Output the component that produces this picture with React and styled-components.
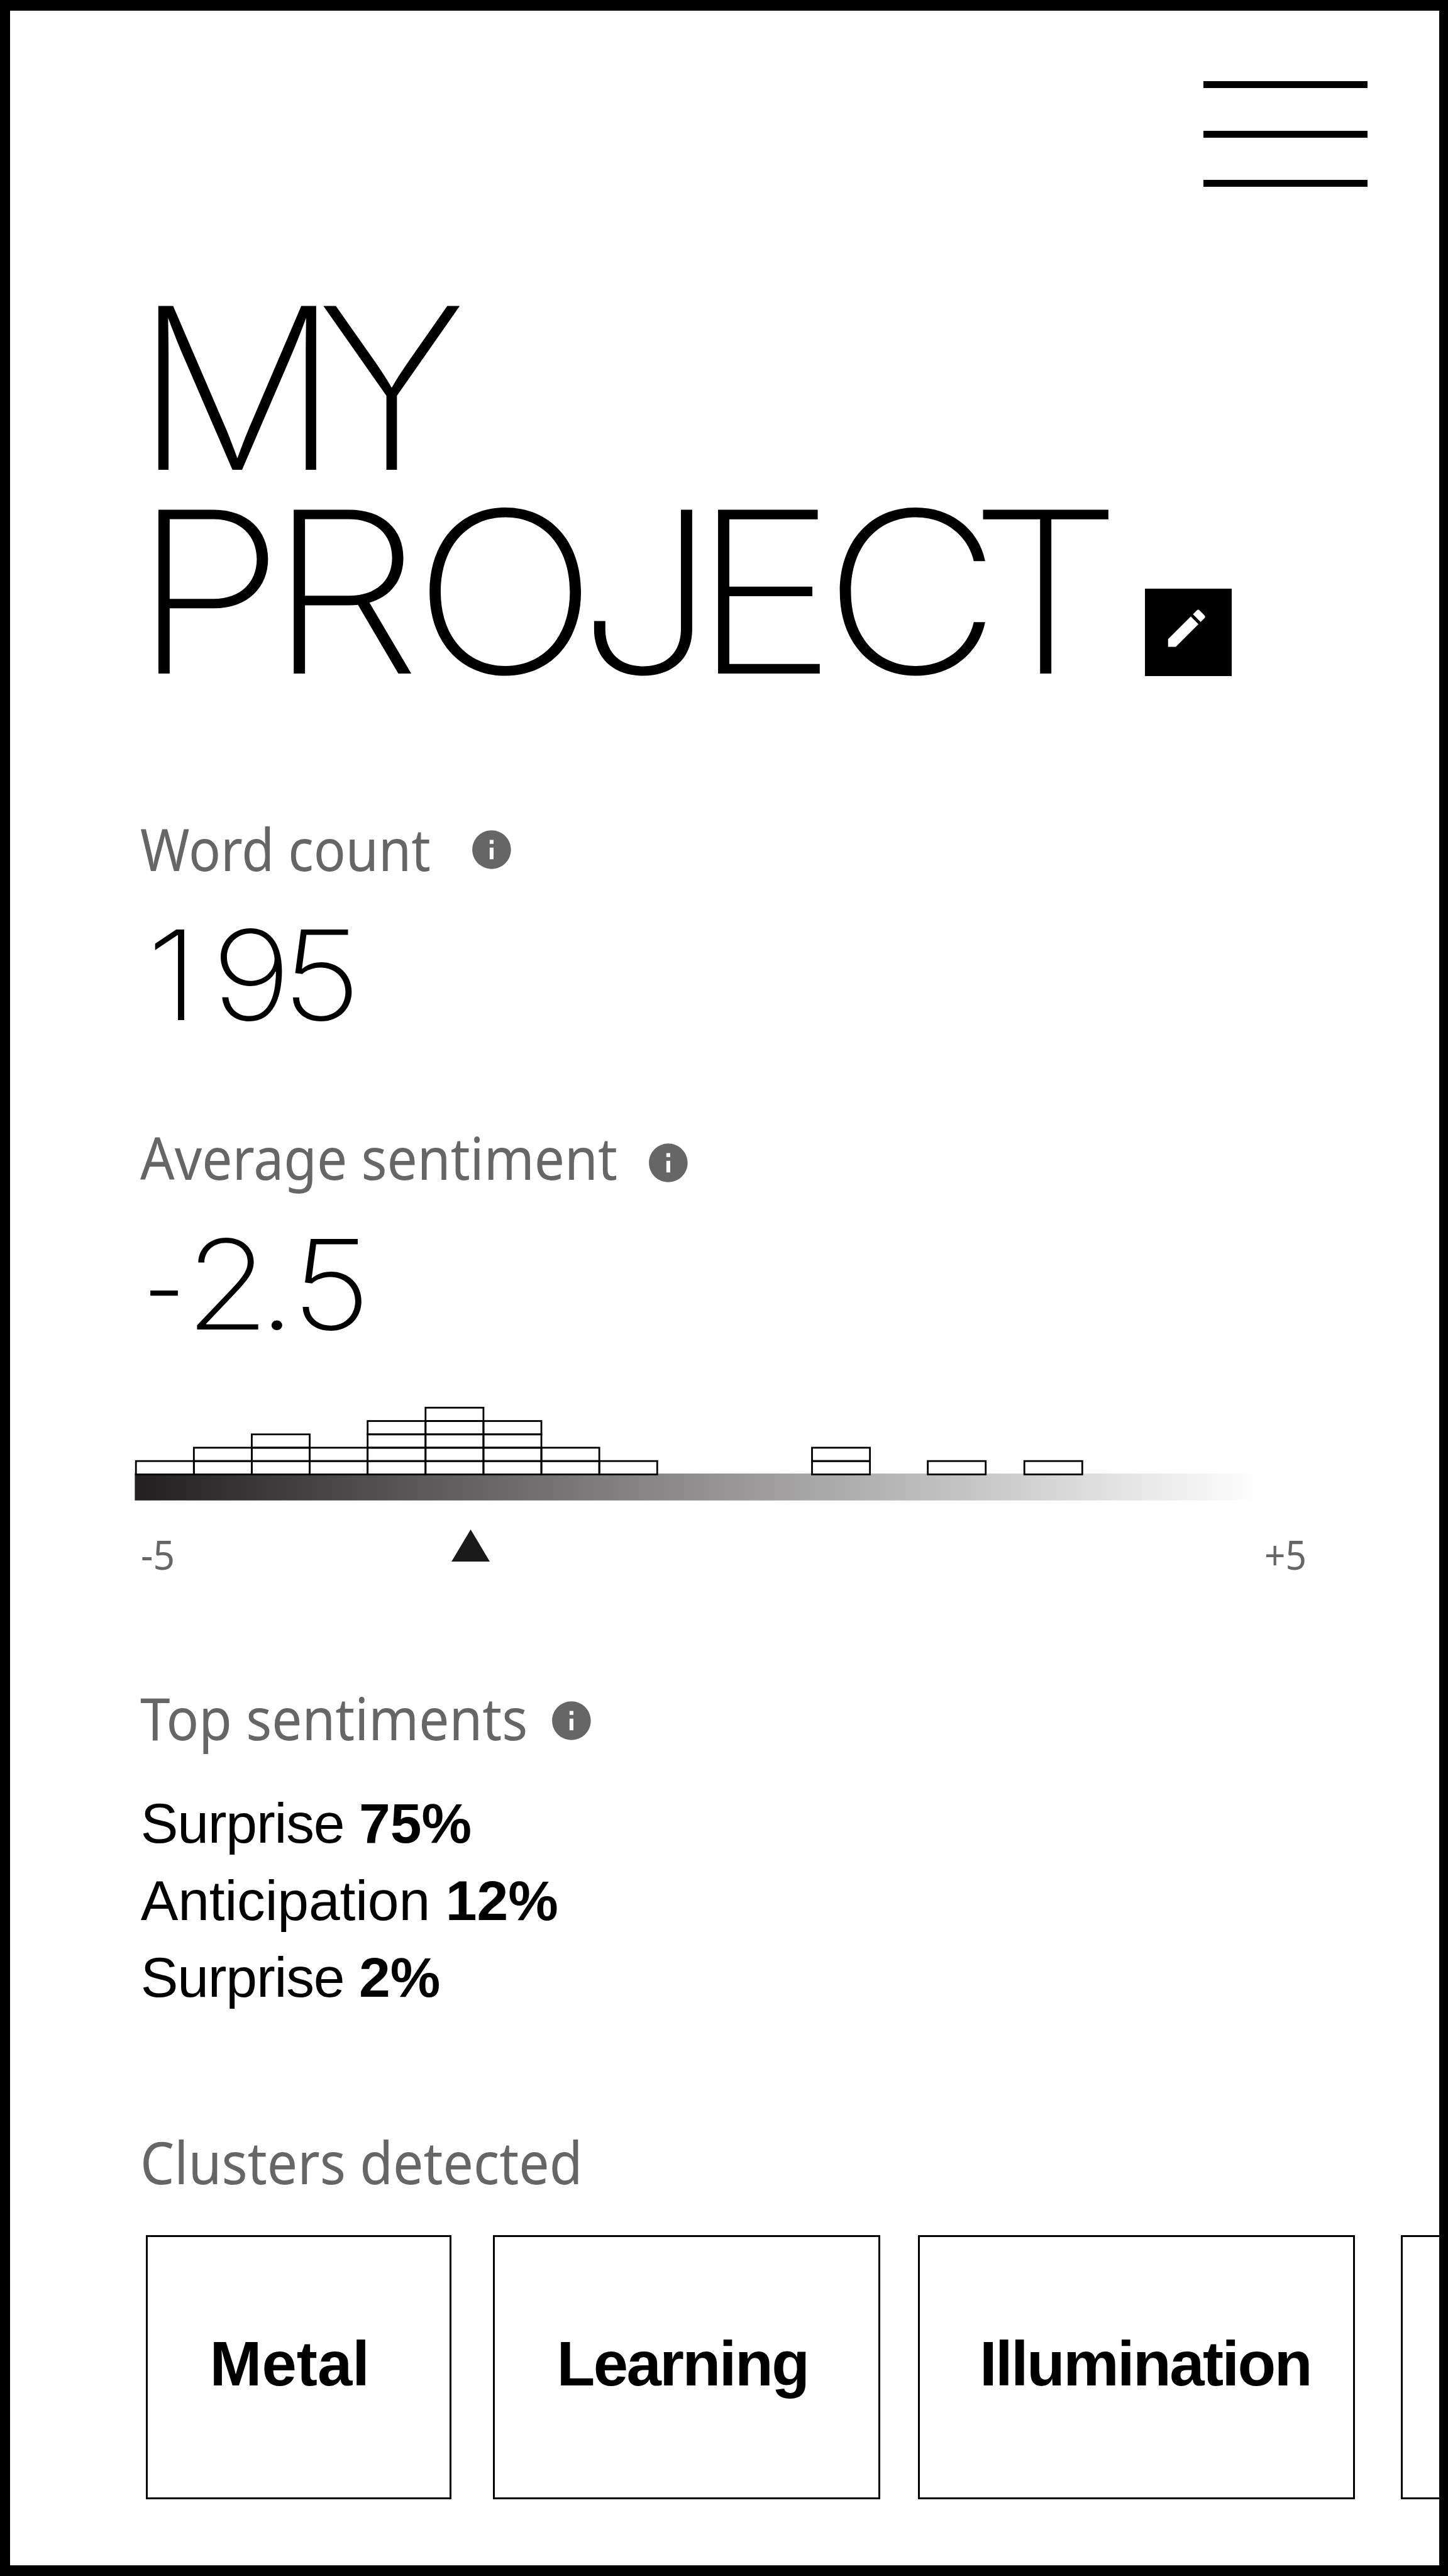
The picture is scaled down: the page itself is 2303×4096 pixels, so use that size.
import React from "react";
import styled, { createGlobalStyle } from "styled-components";

const GlobalStyle = createGlobalStyle`
  *, *::before, *::after { box-sizing: border-box; }
  body { margin: 0; background: #000; }
`;

const Screen = styled.main`
  width: 2303px;
  height: 4096px;
  overflow: hidden;
  display: flex;
  flex-direction: column;
  background: #fff;
  color: #000;
  border: solid #000;
  border-width: 17px 14px 17px 16px;
  padding-left: 198px;
`;

const Header = styled.header`
  display: flex;
  justify-content: flex-end;
  padding: 112px 114px 0 0;
`;

const MenuButton = styled.button`
  display: flex;
  flex-direction: column;
  justify-content: space-between;
  width: 261.4px;
  height: 168px;
  padding: 0;
  border: 0;
  background: none;
`;

const MenuBar = styled.span`
  height: 11px;
  background: #000;
`;

const Title = styled.h1`
  margin: 157.8px 0 0;
  font: 200 358px/324.5px Inter, "Liberation Sans", sans-serif;
  font-kerning: none;
`;

const TitleLine = styled.span`
  display: flex;
  height: 324.5px;
`;

const TitleWord = styled.span`
  flex: none;
  width: ${(p) => p.$width}px;
  white-space: nowrap;
  transform: translateX(${(p) => p.$nudge}px) scaleX(${(p) => p.$stretch});
  transform-origin: 0 50%;
`;

const Glyph = styled.span`
  letter-spacing: ${(p) => p.$track}px;
`;

const EditButton = styled.button`
  display: flex;
  width: 138.3px;
  height: 138.3px;
  margin-top: 157px;
  padding: 23.6px 0 0 26.8px;
  border: 0;
  background: #000;
  color: #fff;
`;

const PencilIcon = styled.svg`
  display: block;
  width: 78.3px;
  height: 78.3px;
  fill: currentColor;
`;

const SectionHead = styled.div`
  display: flex;
  height: 110px;
  margin: ${(p) => p.$top}px 0 0 8.7px;
  color: #666;
`;

const SectionLabel = styled.h2`
  flex: none;
  width: ${(p) => p.$width}px;
  margin: 0;
  font: 400 94px/110px "Noto Sans", "Open Sans", sans-serif;
  white-space: nowrap;
`;

const Condensed = styled.span`
  display: inline-block;
  transform: scaleX(${(p) => p.$ratio});
  transform-origin: 0 50%;
`;

const InfoSvg = styled.svg`
  flex: none;
  width: 73.8px;
  height: 73.8px;
  margin-top: ${(p) => p.$drop}px;
  fill: #666;
`;

const Figure = styled.p`
  height: 200px;
  margin: 46.4px 0 0 ${(p) => p.$left}px;
  font: 200 198px/200px Inter, "Liberation Sans", sans-serif;
  font-kerning: none;
  white-space: nowrap;
  transform: scaleX(1.1);
  transform-origin: 0 50%;
`;

const Minus = styled.span`
  display: inline-block;
  margin-right: -27px;
  transform: translateY(4px) scaleX(0.7);
  transform-origin: 0 50%;
`;

const Histogram = styled.svg`
  display: block;
  flex: none;
  width: 1800px;
  height: 151px;
  margin-top: 93.3px;
`;

const Axis = styled.div`
  display: flex;
  width: 1865px;
  height: 110px;
`;

const AxisLabel = styled.span`
  width: ${(p) => p.$width}px;
  padding-left: ${(p) => p.$inset}px;
  margin: 50.6px 0 0 ${(p) => p.$push};
  color: #666;
  font: 400 63px/70px "Noto Sans", "Open Sans", sans-serif;
  white-space: nowrap;
`;

const Pointer = styled.svg`
  width: 61.2px;
  height: 51.2px;
  margin-top: 45.8px;
  fill: #1a1a1a;
`;

const SentimentList = styled.ul`
  list-style: none;
  margin: 52.2px 0 -1px 9.7px;
  padding: 0;
  font: 400 89.5px/122.7px "Liberation Sans", Arial, sans-serif;
`;

const SentimentItem = styled.li`
  height: 122.7px;
  white-space: pre;
  letter-spacing: ${(p) => p.$track}px;
`;

const Share = styled.strong`
  font-weight: 700;
  letter-spacing: 0;
`;

const Clusters = styled.div`
  display: flex;
  flex: none;
  height: 419.8px;
  margin: 62px 0 0 17.6px;
`;

const ClusterCard = styled.div`
  flex: none;
  display: flex;
  align-items: center;
  width: ${(p) => p.$width}px;
  margin-right: ${(p) => p.$gap}px;
  padding: 0 0 11px ${(p) => p.$inset}px;
  border: 3px solid #000;
  font: 700 99.5px/120px "Liberation Sans", Arial, sans-serif;
  letter-spacing: ${(p) => p.$track}px;
`;

const COLUMN_W = 92.12;
const ROW_H = 21.22;
const BASE_Y = 109.4;

// Left edge of each stack and how many samples it holds.
const stacks = [
  ...[1, 2, 3, 2, 4, 5, 4, 2, 1].map((count, i) => ({ x: 2.2 + i * COLUMN_W, count })),
  { x: 1077.5, count: 2 },
  { x: 1261.6, count: 1 },
  { x: 1415.2, count: 1 },
];

const sentiments = [
  { name: "Surprise", share: "75%", track: -1.2 },
  { name: "Anticipation", share: "12%", track: -0.2 },
  { name: "Surprise", share: "2%", track: -1.2 },
];

const clusters = [
  { name: "Metal", width: 486, gap: 66.8, inset: 99, track: 0 },
  { name: "Learning", width: 615.6, gap: 59.9, inset: 98, track: -2.5 },
  { name: "Illumination", width: 695.3, gap: 72.5, inset: 95, track: -2.6 },
  { name: "", width: 500, gap: 0, inset: 97, track: 0 },
];

const projectGlyphs = [
  ["P", -23.5],
  ["R", -12.1],
  ["O", -29.7],
  ["J", -33.6],
  ["E", -20.2],
  ["C", -46.9],
  ["T", 0],
];

function InfoIcon({ drop }) {
  return (
    <InfoSvg viewBox="0 0 24 24" $drop={drop}>
      <path d="M12 2C6.48 2 2 6.48 2 12s4.48 10 10 10 10-4.48 10-10S17.52 2 12 2zm1 15h-2v-6h2v6zm0-8h-2V7h2v2z" />
    </InfoSvg>
  );
}

function SentimentChart() {
  return (
    <Histogram viewBox="0 0 1800 151">
      <defs>
        <linearGradient id="scale" x1="0" x2="1" y1="0" y2="0">
          <stop offset="0" stopColor="#231f20" />
          <stop offset="1" stopColor="#fff" />
        </linearGradient>
      </defs>
      <rect x="0.4" y="108" width="1789" height="42.8" fill="url(#scale)" />
      <g fill="none" stroke="#000" strokeWidth="2.8">
        {stacks.map(({ x, count }) =>
          Array.from({ length: count }, (_, row) => (
            <rect key={`${x}-${row}`} x={x} y={BASE_Y - (row + 1) * ROW_H} width={COLUMN_W} height={ROW_H} />
          ))
        )}
      </g>
    </Histogram>
  );
}

export default function App() {
  return (
    <>
      <GlobalStyle />
      <Screen>
        <Header>
          <MenuButton aria-label="Menu">
            <MenuBar />
            <MenuBar />
            <MenuBar />
          </MenuButton>
        </Header>

        <Title>
          <TitleLine>
            <TitleWord $width={700} $nudge={-0.5} $stretch={1.02}>
              <Glyph $track={-37}>M</Glyph>Y
            </TitleWord>
          </TitleLine>
          <TitleLine>
            <TitleWord $width={1606.8} $nudge={-3} $stretch={1.09}>
              {projectGlyphs.map(([letter, track]) => (
                <Glyph key={letter} $track={track}>{letter}</Glyph>
              ))}
            </TitleWord>
            <EditButton aria-label="Edit">
              <PencilIcon viewBox="0 0 24 24">
                <path d="M3 17.25V21h3.75L17.81 9.94l-3.75-3.75L3 17.25zM20.71 7.04a.996.996 0 0 0 0-1.41l-2.34-2.34a.996.996 0 0 0-1.41 0l-1.83 1.83 3.75 3.75 1.83-1.83z" />
              </PencilIcon>
            </EditButton>
          </TitleLine>
        </Title>

        <SectionHead $top={189.8}>
          <SectionLabel $width={522.4}><Condensed $ratio={0.899}>Word count</Condensed></SectionLabel>
          <InfoIcon drop={20.3} />
        </SectionHead>
        <Figure $left={18.6}>
          <Glyph $track={18.5}>1</Glyph>
          <Glyph $track={-13.5}>9</Glyph>5
        </Figure>

        <SectionHead $top={135.3}>
          <SectionLabel $width={802.9}><Condensed $ratio={0.911}>Average sentiment</Condensed></SectionLabel>
          <InfoIcon drop={26.3} />
        </SectionHead>
        <Figure $left={13}>
          <Minus>-</Minus>
          <Glyph $track={-17}>2</Glyph>
          <Glyph $track={-6}>.</Glyph>5
        </Figure>

        <SentimentChart />
        <Axis>
          <AxisLabel $width={504.3} $inset={9.6} $push="0"><Condensed $ratio={0.96}>-5</Condensed></AxisLabel>
          <Pointer viewBox="0 0 61.2 51.2">
            <path d="M30.6 0L61.2 51.2H0z" />
          </Pointer>
          <AxisLabel $width={68} $inset={0} $push="auto"><Condensed $ratio={0.93}>+5</Condensed></AxisLabel>
        </Axis>

        <SectionHead $top={179.9}>
          <SectionLabel $width={649.3}><Condensed $ratio={0.91}>Top sentiments</Condensed></SectionLabel>
          <InfoIcon drop={23} />
        </SectionHead>
        <SentimentList>
          {sentiments.map(({ name, share, track }) => (
            <SentimentItem key={share} $track={track}>
              {name} <Share>{share}</Share>
            </SentimentItem>
          ))}
        </SentimentList>

        <SectionHead $top={177}>
          <SectionLabel $width={800}><Condensed $ratio={0.914}>Clusters detected</Condensed></SectionLabel>
        </SectionHead>
        <Clusters>
          {clusters.map(({ name, width, gap, inset, track }) => (
            <ClusterCard key={name} $width={width} $gap={gap} $inset={inset} $track={track}>
              {name}
            </ClusterCard>
          ))}
        </Clusters>
      </Screen>
    </>
  );
}
